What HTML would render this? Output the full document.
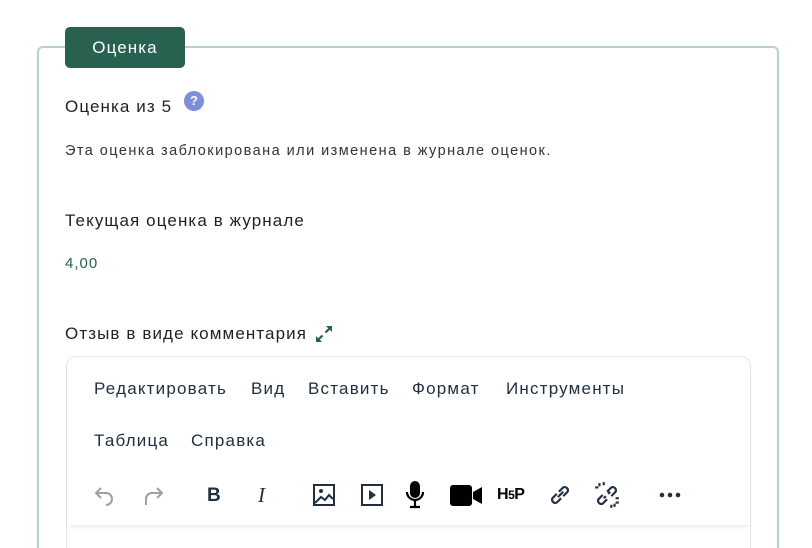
<!DOCTYPE html>
<html><head><meta charset="utf-8"><style>
*{box-sizing:border-box;margin:0;padding:0}
html,body{width:812px;height:548px;overflow:hidden}
body{background:#fff;font-family:"Liberation Sans",Arial,sans-serif;color:#1d2125;position:relative}
.fs{position:absolute;left:37px;top:46px;width:742px;height:502px;border:2px solid #b9d1cd;border-bottom:none;border-radius:6px 6px 0 0}
.lg{position:absolute;left:65px;top:27px;width:120px;height:41px;background:#28614f;border-radius:5px;color:#fff;font-size:17px;letter-spacing:1.1px;text-align:center;line-height:41px}
.t{position:absolute;white-space:nowrap}
.L{font-size:17px;letter-spacing:1.1px}
.q{position:absolute;left:184px;top:91px;width:20px;height:20px;border-radius:50%;background:#7b90d8;color:#fff;font-size:13px;font-weight:bold;text-align:center;line-height:20px}
.ed{position:absolute;left:66px;top:356px;width:685px;height:192px;border:1px solid #e2e4e6;border-bottom:none;border-radius:10px 10px 0 0}
.tb{position:absolute;left:67px;top:357px;width:683px;height:168px;border-radius:10px 10px 0 0;box-shadow:0 3px 5px -2px rgba(0,0,0,.12);background:#fff}
.m{font-size:17px;letter-spacing:1.2px;color:#222f3e}
svg{position:absolute}
</style></head><body>
<div class="fs"></div>
<div class="lg">Оценка</div>
<div class="t L" style="left:65px;top:97px">Оценка из 5</div>
<div class="q">?</div>
<div class="t" style="left:65px;top:143px;font-size:14.5px;letter-spacing:1.45px;color:#333">Эта оценка заблокирована или изменена в журнале оценок.</div>
<div class="t L" style="left:65px;top:211px">Текущая оценка в журнале</div>
<div class="t" style="left:65px;top:255px;font-size:15px;letter-spacing:1px;color:#28614f">4,00</div>
<div class="t L" style="left:65px;top:324px">Отзыв в виде комментария</div>
<svg style="left:314px;top:324px" width="20" height="20" viewBox="0 0 20 20" fill="#28614f"><path d="M12 2h6v6l-2.2-2.2-3.5 3.5-1.6-1.6 3.5-3.5z"/><path d="M8 18H2v-6l2.2 2.2 3.5-3.5 1.6 1.6-3.5 3.5z"/></svg>
<div class="ed"></div>
<div class="tb"></div>
<div class="t m" style="left:94px;top:379px">Редактировать</div>
<div class="t m" style="left:251px;top:379px">Вид</div>
<div class="t m" style="left:308px;top:379px">Вставить</div>
<div class="t m" style="left:412px;top:379px">Формат</div>
<div class="t m" style="left:506px;top:379px">Инструменты</div>
<div class="t m" style="left:94px;top:431px">Таблица</div>
<div class="t m" style="left:191px;top:431px">Справка</div>
<svg style="left:93px;top:483px" width="24" height="24" viewBox="0 0 24 24" fill="none" stroke="#9aa0a6" stroke-width="2"><path d="M8 5L3 10l5 5M3 10h10a6 6 0 0 1 0 12"/></svg>
<svg style="left:141px;top:483px" width="24" height="24" viewBox="0 0 24 24" fill="none" stroke="#9aa0a6" stroke-width="2"><path d="M16 5l5 5-5 5M21 10H11a6 6 0 0 0-6 6v6"/></svg>
<div class="t" style="left:207px;top:485px;font-size:19px;font-weight:bold;color:#222f3e">B</div>
<div class="t" style="left:258px;top:483px;font-size:21px;font-style:italic;font-family:'Liberation Serif',serif;color:#222f3e">I</div>
<svg style="left:313px;top:484px" width="22" height="22" viewBox="0 0 22 22" fill="none" stroke="#222f3e" stroke-width="2"><rect x="1" y="1" width="20" height="20"/><circle cx="8" cy="7" r="2" fill="#222f3e" stroke="none"/><path d="M2 19l6-6 4 3 4-5 4 4"/></svg>
<svg style="left:361px;top:484px" width="22" height="22" viewBox="0 0 22 22" fill="none" stroke="#222f3e" stroke-width="2"><rect x="1" y="1" width="20" height="20"/><path d="M8 6v10l7-5z" fill="#222f3e" stroke="none"/></svg>
<svg style="left:404px;top:480px" width="22" height="30" viewBox="0 0 22 30"><rect x="6" y="1" width="10" height="17" rx="5" fill="#000"/><path d="M3 12a8 8 0 0 0 16 0M11 20v6M6 27h10" fill="none" stroke="#000" stroke-width="2.2"/></svg>
<svg style="left:450px;top:485px" width="34" height="22" viewBox="0 0 34 22" fill="#000"><rect x="0" y="0" width="22" height="21" rx="3"/><path d="M23 7l9-5v17l-9-5z"/></svg>
<div class="t" style="left:497px;top:486px;font-size:16px;font-weight:bold;color:#000;letter-spacing:-0.5px">H<span style="font-size:12px">5</span>P</div>
<svg style="left:547px;top:482px" width="26" height="26" viewBox="0 0 24 24" fill="none" stroke="#222f3e" stroke-width="2"><path d="M10 14l5-5M9 11l-4 4a3 3 0 0 0 4 4l4-4M15 13l4-4a3 3 0 0 0-4-4l-4 4"/></svg>
<svg style="left:593px;top:481px" width="28" height="28" viewBox="0 0 26 26" fill="none" stroke="#222f3e" stroke-width="2"><path d="M10 16l2-2M14 12l2-2M9 13l-4 4a3 3 0 0 0 4 4l4-4M17 14l4-4a3 3 0 0 0-4-4l-4 4M6 2v3M2 6h3M10 1v3M20 24v-3M24 20h-3M17 25v-3M24 16h-3"/></svg>
<svg style="left:658px;top:492px" width="24" height="6" viewBox="0 0 24 6" fill="#222f3e"><circle cx="4" cy="3" r="2.3"/><circle cx="12" cy="3" r="2.3"/><circle cx="20" cy="3" r="2.3"/></svg>
</body></html>
